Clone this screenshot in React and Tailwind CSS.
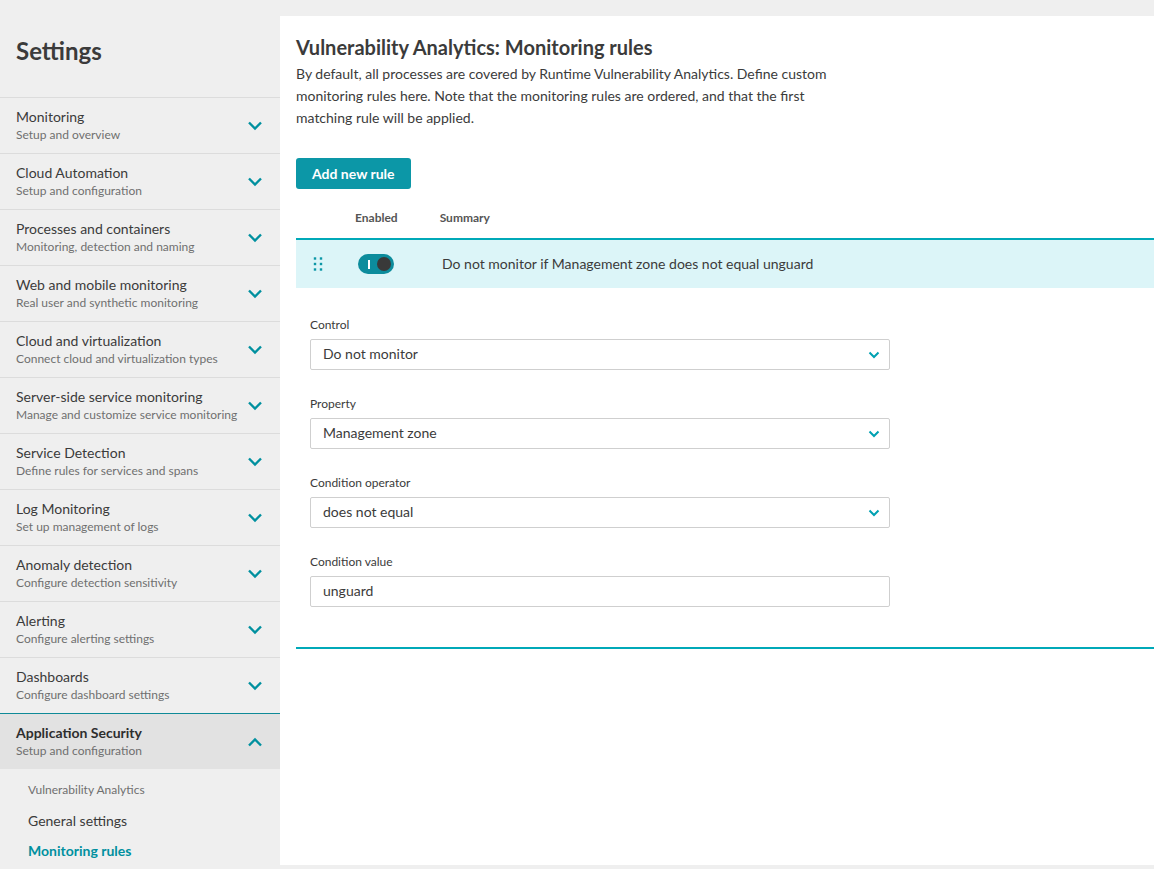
import React from "react";

const navItems = [
  { title: "Monitoring", sub: "Setup and overview" },
  { title: "Cloud Automation", sub: "Setup and configuration" },
  { title: "Processes and containers", sub: "Monitoring, detection and naming" },
  { title: "Web and mobile monitoring", sub: "Real user and synthetic monitoring" },
  { title: "Cloud and virtualization", sub: "Connect cloud and virtualization types" },
  { title: "Server-side service monitoring", sub: "Manage and customize service monitoring" },
  { title: "Service Detection", sub: "Define rules for services and spans" },
  { title: "Log Monitoring", sub: "Set up management of logs" },
  { title: "Anomaly detection", sub: "Configure detection sensitivity" },
  { title: "Alerting", sub: "Configure alerting settings" },
  { title: "Dashboards", sub: "Configure dashboard settings" },
];

function Chevron({ up = false, className = "" }) {
  return (
    <svg width="16" height="10" viewBox="0 0 16 10" className={className}>
      <path
        d={up ? "M2 8.5L8 2.5L14 8.5" : "M2 1.5L8 7.5L14 1.5"}
        fill="none"
        stroke="currentColor"
        strokeWidth="2.4"
      />
    </svg>
  );
}

function SmallChevron() {
  return (
    <svg width="12" height="8" viewBox="0 0 12 8" className="text-[#00a1b2]">
      <path d="M1.5 1.5L6 6L10.5 1.5" fill="none" stroke="currentColor" strokeWidth="2" />
    </svg>
  );
}

function NavItem({ title, sub }) {
  return (
    <div className="h-[56px] border-t border-[#dcdcdc] flex items-center pl-4 pr-[17px]">
      <div className="flex-1 min-w-0">
        <div className="text-[14px] leading-[20px] text-[#3b3b3b] -mt-[2px]">{title}</div>
        <div className="text-[12px] leading-[16px] text-[#6f6f6f] whitespace-nowrap">{sub}</div>
      </div>
      <Chevron className="text-[#00909f] shrink-0" />
    </div>
  );
}

function Field({ label, value, select = true, last = false }) {
  return (
    <div className={last ? "" : "mb-[26px]"}>
      <div className="text-[12px] leading-[16px] text-[#3b3b3b] mb-[6px]">{label}</div>
      <div className="h-[31px] border border-[#cfcfcf] rounded-[2px] flex items-center pl-[12px] pr-[9px] bg-white">
        <span className="flex-1 text-[14px] text-[#3b3b3b] -mt-[2px]">{value}</span>
        {select && <SmallChevron />}
      </div>
    </div>
  );
}

export default function App() {
  return (
    <div
      className="min-h-screen bg-[#efefef] pt-4 pb-1 flex"
      style={{ fontFamily: "Lato, 'Open Sans', sans-serif" }}
    >
      <aside className="w-[280px] shrink-0">
        <div className="h-[81px] flex items-center pl-4">
          <h1 className="text-[24px] font-bold text-[#3b3b3b] pb-[12px]">Settings</h1>
        </div>
        {navItems.map((item) => (
          <NavItem key={item.title} {...item} />
        ))}
        <div className="h-[56px] border-t border-[#0f8a98] bg-[#e2e2e2] flex items-center pl-4 pr-[17px]">
          <div className="flex-1">
            <div className="text-[14px] leading-[20px] font-bold text-[#2e2e2e] -mt-[2px]">Application Security</div>
            <div className="text-[12px] leading-[16px] text-[#6f6f6f]">Setup and configuration</div>
          </div>
          <Chevron up className="text-[#00909f]" />
        </div>
        <div className="pl-[28px] pt-[12px]">
          <div className="text-[12px] leading-[18px] text-[#6f6f6f]">Vulnerability Analytics</div>
          <div className="text-[14px] leading-[20px] text-[#3b3b3b] mt-[12px]">General settings</div>
          <div className="text-[14px] leading-[20px] font-bold text-[#00909f] mt-[10px]">Monitoring rules</div>
        </div>
      </aside>

      <main className="flex-1 bg-white pl-4 pt-[18px]">
        <h2 className="text-[20px] leading-[26px] font-bold text-[#3b3b3b]">
          Vulnerability Analytics: Monitoring rules
        </h2>
        <p className="text-[14px] leading-[22px] text-[#3b3b3b] mt-[3px]">
          By default, all processes are covered by Runtime Vulnerability Analytics. Define custom
          <br />
          monitoring rules here. Note that the monitoring rules are ordered, and that the first
          <br />
          matching rule will be applied.
        </p>
        <button className="mt-[29px] h-[31px] px-4 rounded-[3px] bg-[#0c97a7] text-white text-[14px] font-bold">
          Add new rule
        </button>

        <div className="flex h-[49px] pt-[21px] text-[12px] leading-[16px] font-bold text-[#555]">
          <span className="ml-[59px]">Enabled</span>
          <span className="ml-[42px]">Summary</span>
        </div>

        <div className="border-t-2 border-[#00a9b8] bg-[#dcf5f8] h-[50px] flex items-center">
          <svg width="10" height="14" viewBox="0 0 10 14" className="ml-[17px] text-[#0c97a7]">
            {[1.5, 7, 12.5].map((y) =>
              [2, 8].map((x) => <rect key={`${x}-${y}`} x={x - 1.2} y={y - 1.2} width="2.4" height="2.4" fill="currentColor" />)
            )}
          </svg>
          <div className="ml-[35px] w-[36px] h-[20px] rounded-full bg-[#0c8c9c] flex items-center justify-between pl-[10px] pr-[3px]">
            <span className="w-[2px] h-[9px] bg-white" />
            <span className="w-[14px] h-[14px] rounded-full bg-[#393939]" />
          </div>
          <span className="ml-[48px] text-[14px] text-[#3b3b3b] -mt-[2px]">
            Do not monitor if Management zone does not equal unguard
          </span>
        </div>

        <div className="pl-[14px] pt-[29px] w-[594px]">
          <Field label="Control" value="Do not monitor" />
          <Field label="Property" value="Management zone" />
          <Field label="Condition operator" value="does not equal" />
          <Field label="Condition value" value="unguard" select={false} last />
        </div>

        <div className="border-t-2 border-[#00a9b8] mt-[40px]" />
      </main>
    </div>
  );
}
